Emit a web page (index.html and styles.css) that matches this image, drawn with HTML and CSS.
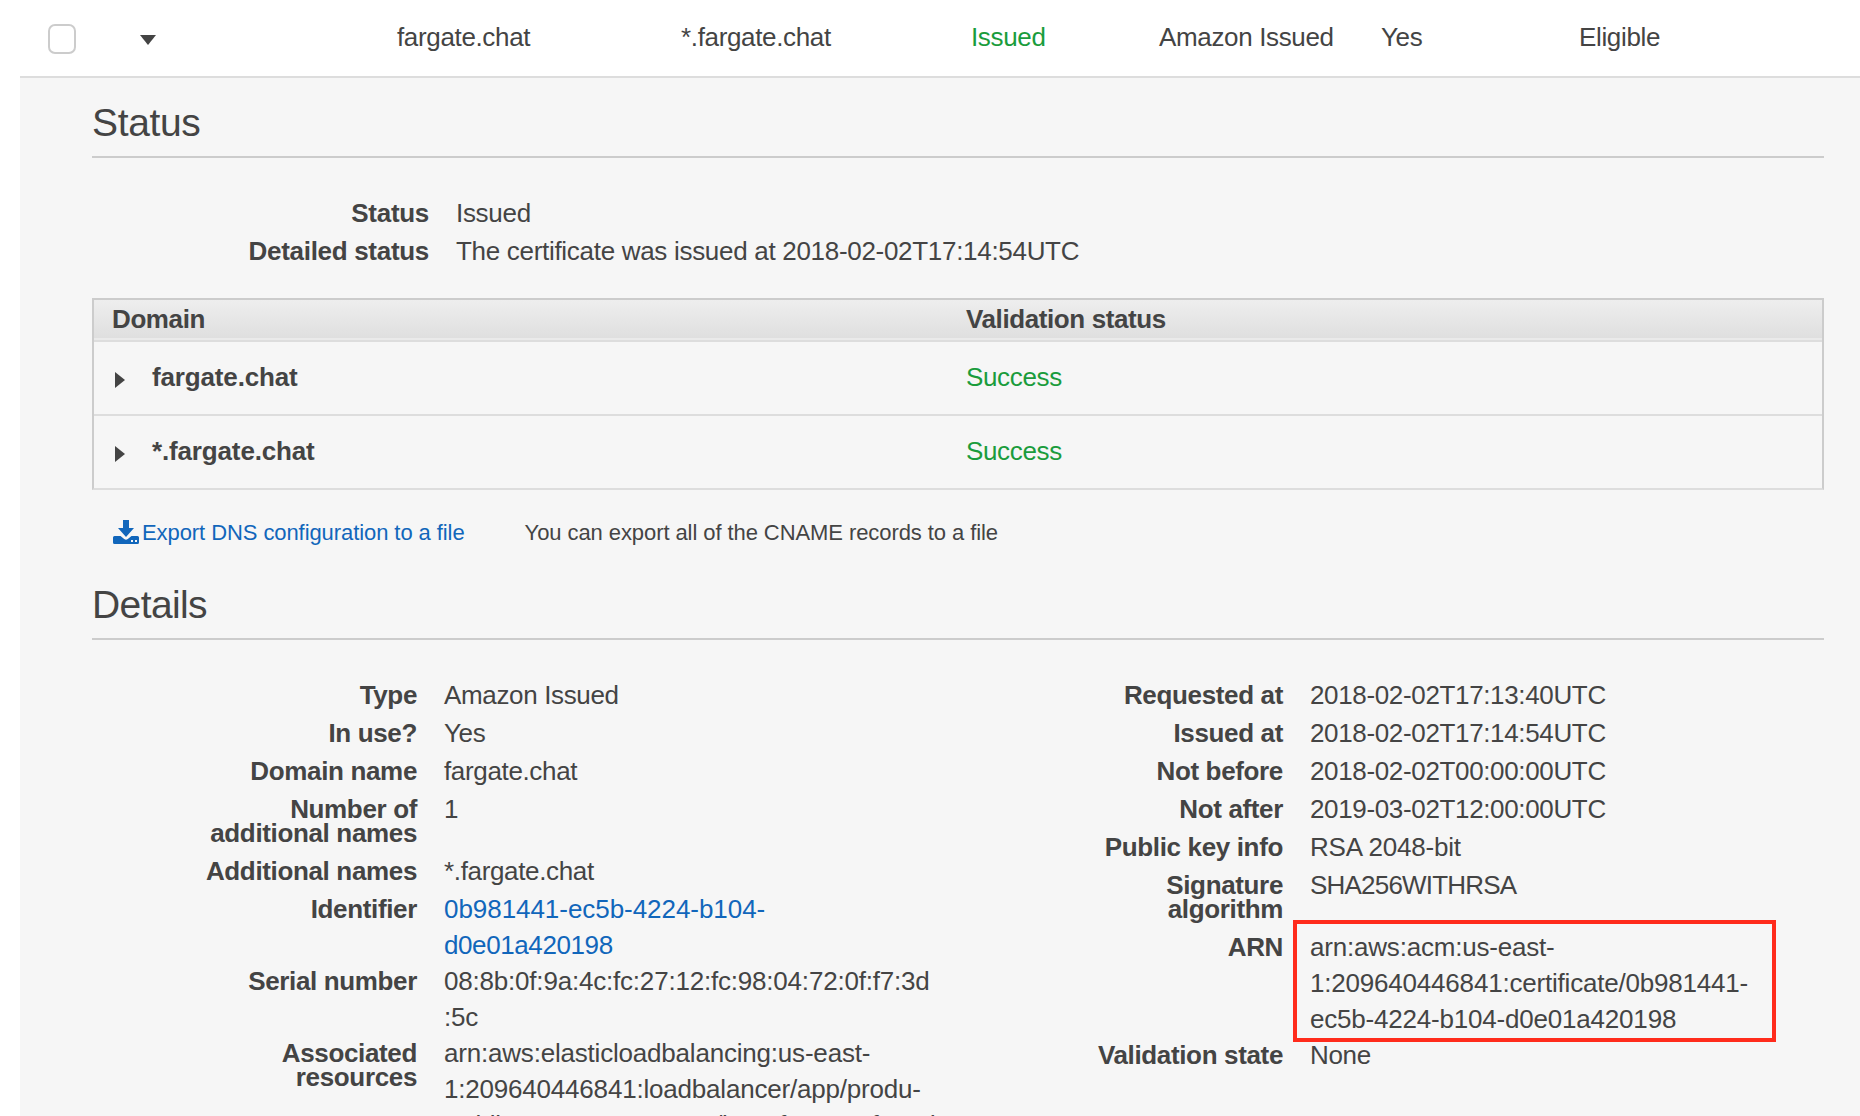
FILE: index.html
```
<!DOCTYPE html>
<html lang="en">
<head>
<meta charset="utf-8">
<title>Certificate details</title>
<link rel="stylesheet" href="styles.css">
</head>
<body>
<header class="cert-row">
  <div><span class="checkbox"></span></div>
  <div><svg class="caret-down" width="18" height="10" viewBox="0 0 18 10"><path d="M1 0H17L9 10Z"/></svg></div>
  <div>fargate.chat</div>
  <div>*.fargate.chat</div>
  <div class="ok">Issued</div>
  <div>Amazon Issued</div>
  <div>Yes</div>
  <div>Eligible</div>
</header>
<main class="panel">
  <h2 class="heading">Status</h2>
  <dl class="status-list">
    <div class="entry"><dt>Status</dt><dd>Issued</dd></div>
    <div class="entry"><dt>Detailed status</dt><dd>The certificate was issued at 2018-02-02T17:14:54UTC</dd></div>
  </dl>
  <section class="domains">
    <div class="domains-head"><div>Domain</div><div>Validation status</div></div>
    <div class="domains-row">
      <div class="domain-name"><svg width="10" height="16" viewBox="0 0 10 16"><path d="M0 0L10 8L0 16Z"/></svg><b>fargate.chat</b></div>
      <div class="ok">Success</div>
    </div>
    <div class="domains-row">
      <div class="domain-name"><svg width="10" height="16" viewBox="0 0 10 16"><path d="M0 0L10 8L0 16Z"/></svg><b>*.fargate.chat</b></div>
      <div class="ok">Success</div>
    </div>
  </section>
  <div class="export">
    <a class="export-link"><svg width="26" height="24" viewBox="0 0 26 24"><path d="M10 0h6v8h5l-8 9-8-9h5z"/><path fill-rule="evenodd" d="M1.500 16h6l3.700 3q1.800 1.400 3.600 0l3.700-3h6q1.500 0 1.500 1.500v5q0 1.500-1.500 1.500h-23q-1.500 0-1.500-1.500v-5q0-1.500 1.500-1.500zM18 20v2h2v-2zM22 20v2h2v-2z"/></svg><span>Export DNS configuration to a file</span></a>
    <span class="export-note">You can export all of the CNAME records to a file</span>
  </div>
  <h2 class="heading heading-details">Details</h2>
  <div class="details">
    <dl class="details-list">
      <div class="entry"><dt>Type</dt><dd>Amazon Issued</dd></div>
      <div class="entry"><dt>In use?</dt><dd>Yes</dd></div>
      <div class="entry"><dt>Domain name</dt><dd>fargate.chat</dd></div>
      <div class="entry"><dt>Number of<br>additional names</dt><dd>1</dd></div>
      <div class="entry"><dt>Additional names</dt><dd>*.fargate.chat</dd></div>
      <div class="entry"><dt>Identifier</dt><dd class="link"><span class="hyphenated">0b981441-ec5b-4224-b104-</span><br>d0e01a420198</dd></div>
      <div class="entry"><dt>Serial number</dt><dd class="long">08:8b:0f:9a:4c:fc:27:12:fc:98:04:72:0f:f7:3d<br>:5c</dd></div>
      <div class="entry"><dt>Associated<br>resources</dt><dd class="long">arn:aws:elasticloadbalancing:us-east-<br>1:209640446841:loadbalancer/app/produ-<br>Publi-5SRG16JHF8WM/b5a1fa21a21fa5ada</dd></div>
    </dl>
    <dl class="details-list">
      <div class="entry"><dt>Requested at</dt><dd class="date">2018-02-02T17:13:40UTC</dd></div>
      <div class="entry"><dt>Issued at</dt><dd class="date">2018-02-02T17:14:54UTC</dd></div>
      <div class="entry"><dt>Not before</dt><dd class="date">2018-02-02T00:00:00UTC</dd></div>
      <div class="entry"><dt>Not after</dt><dd class="date">2019-03-02T12:00:00UTC</dd></div>
      <div class="entry"><dt>Public key info</dt><dd class="long">RSA 2048-bit</dd></div>
      <div class="entry"><dt>Signature<br>algorithm</dt><dd class="caps">SHA256WITHRSA</dd></div>
      <div class="entry"><dt>ARN</dt><dd class="long marked">arn:aws:acm:us-east-<br>1:209640446841:certificate/0b981441-<br>ec5b-4224-b104-d0e01a420198</dd></div>
      <div class="entry"><dt>Validation state</dt><dd>None</dd></div>
    </dl>
  </div>
</main>
</body>
</html>
```
FILE: styles.css
```
*, *::after { box-sizing: border-box; }
body {
  margin: 0;
  height: 1116px;
  overflow: hidden;
  background: #fff;
  color: #444;
  font: 26px/36px "Liberation Sans", Arial, sans-serif;
  letter-spacing: -0.35px;
}
svg { display: block; fill: #444; }
h2, dl, dd { margin: 0; }

.cert-row {
  display: grid;
  grid-template-columns: 91px 258px 284px 290px 188px 222px 198px auto;
  height: 76px;
  padding: 19px 0 0 48px;
}
.checkbox {
  display: block;
  width: 28px;
  height: 30px;
  margin-top: 5px;
  border: 2px solid #ccc;
  border-radius: 7px;
}
.caret-down { margin-top: 16px; }
.ok { color: #1a9c3c; }

.panel {
  height: 1040px;
  margin-left: 20px;
  padding: 20px 36px 0 72px;
  overflow: hidden;
  border-top: 2px solid #ddd;
  background: #f6f6f6;
}
.heading {
  height: 60px;
  padding-top: 2px;
  border-bottom: 2px solid #ccc;
  font-size: 39px;
  font-weight: 400;
  line-height: 46px;
  letter-spacing: -0.35px;
}
.heading-details { letter-spacing: -0.6px; }
.entry {
  display: grid;
  grid-template-columns: 325px 1fr;
  column-gap: 27px;
}
dt {
  padding: 6px 0 8px;
  font-weight: 700;
  line-height: 24px;
  text-align: right;
}
.status-list { padding-top: 37px; letter-spacing: -0.3px; }
.status-list .entry { grid-template-columns: 337px 1fr; }

.domains {
  margin-top: 27px;
  border: 2px solid #ccc;
  border-bottom-color: #ddd;
}
.domains-head, .domains-row {
  display: grid;
  grid-template-columns: 854px 1fr;
  padding-left: 18px;
}
.domains-head {
  height: 42px;
  padding-top: 1px;
  border-bottom: 2px solid #ddd;
  background: linear-gradient(#eee, #dfdfdf 38px, #eaeaea 38px);
  font-weight: 700;
  letter-spacing: -0.4px;
}
.domains-row { height: 72px; padding-top: 17px; }
.domains-row + .domains-row { height: 74px; border-top: 2px solid #ddd; }
.domain-name { display: flex; gap: 27px; padding-left: 3px; letter-spacing: -0.15px; }
.domain-name svg { margin-top: 13px; }

.export {
  display: flex;
  gap: 60px;
  height: 90px;
  padding: 25px 0 0 21px;
  font-size: 22px;
  letter-spacing: -0.08px;
}
.export-link { display: flex; gap: 3px; color: #1166bb; }
.export-link svg { margin-top: 5px; fill: #1166bb; }

.details { display: grid; grid-template-columns: 866px 1fr; padding-top: 37px; }
.link { color: #1166bb; letter-spacing: -0.4px; }
.hyphenated { letter-spacing: -0.05px; }
.long { letter-spacing: -0.2px; }
.caps { letter-spacing: -0.8px; }
.marked { position: relative; }
/* Highlight frame drawn over the ARN value */
.marked::after {
  content: "";
  position: absolute;
  top: -9px;
  left: -17px;
  width: 483px;
  height: 122px;
  border: 4px solid #ff2b1c;
}
```
